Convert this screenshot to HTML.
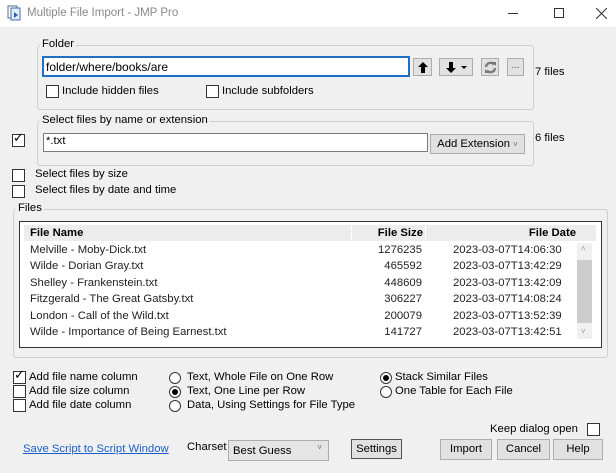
<!DOCTYPE html>
<html><head><style>
*{box-sizing:border-box}
body{margin:0;width:616px;height:473px;overflow:hidden;background:#f0f0f0;font-family:"Liberation Sans",sans-serif;font-size:11.3px;color:#000;position:relative}
.a{position:absolute;white-space:nowrap}
.cb{position:absolute;width:13px;height:13px;border:1px solid #333;background:#fff}
.rd{position:absolute;width:12px;height:12px;border:1px solid #333;border-radius:50%;background:#fff}
.rd.on::after{content:"";position:absolute;left:2px;top:2px;width:6px;height:6px;border-radius:50%;background:#000}
.grp{position:absolute;border:1px solid #cfcfcf;border-radius:3px}
.lg{position:absolute;background:#f0f0f0;padding:0 2px;top:-8px;left:4px}
.btn{position:absolute;border:1px solid #adadad;background:#e1e1e1;text-align:center;line-height:19px}
.in{position:absolute;background:#fff;border:1px solid #7a7a7a}
</style></head><body>
<div class="a" style="left:0;top:0;width:616px;height:27px;background:#fff"></div>
<svg class="a" style="left:7px;top:5px" width="14" height="16"><rect x="1" y="1" width="9" height="12" fill="#fff" stroke="#5a6b80"/><rect x="4" y="3" width="9" height="12" fill="#e4eefa" stroke="#3b6fb0"/><path d="M7 7l4 3-4 3z" fill="#2b5fa5"/></svg>
<div class="a" style="left:27px;top:7px;color:#888;font-size:11.5px">Multiple File Import - JMP Pro</div>
<div class="a" style="left:508px;top:13px;width:10px;height:1px;background:#333"></div>
<div class="a" style="left:554px;top:8px;width:10px;height:10px;border:1px solid #333"></div>
<svg class="a" style="left:596px;top:8px" width="11" height="11"><path d="M0 0L11 11M11 0L0 11" stroke="#333"/></svg>

<div class="grp" style="left:37px;top:45px;width:497px;height:65px"><span class="lg" style="left:2px">Folder</span></div>
<div class="in" style="left:42px;top:56px;width:368px;height:21px;border:2px solid #1f6fc4;padding:2px 2px;font-size:12px">folder/where/books/are</div>
<div class="btn" style="left:413px;top:58px;width:19px;height:18px"><svg style="position:absolute;left:4px;top:3px" width="10" height="11"><path d="M5 0L10 5H7V11H3V5H0Z" fill="#000"/></svg></div>
<div class="btn" style="left:439px;top:58px;width:34px;height:18px"><svg style="position:absolute;left:6px;top:3px" width="22" height="11"><path d="M5 11L10 6H7V0H3V6H0Z" fill="#000"/><path d="M15 4h6l-3 3z" fill="#000"/></svg></div>
<div class="btn" style="left:481px;top:58px;width:18px;height:18px"><svg style="position:absolute;left:2px;top:2px" width="13" height="13"><path d="M2 6A4.5 4.5 0 0 1 10 3.5M11 7A4.5 4.5 0 0 1 3 9.5" stroke="#777" stroke-width="2.2" fill="none"/><path d="M8 1h4v4z M5 12H1V8z" fill="#777"/></svg></div>
<div class="btn" style="left:507px;top:58px;width:17px;height:18px;line-height:14px;font-size:10px;color:#555">...</div>
<div class="a" style="left:535px;top:66px">7 files</div>
<div class="cb" style="left:46px;top:85px"></div><div class="a" style="left:62px;top:85px">Include hidden files</div>
<div class="cb" style="left:206px;top:85px"></div><div class="a" style="left:222px;top:85px">Include subfolders</div>

<div class="grp" style="left:37px;top:121px;width:497px;height:45px"><span class="lg" style="left:2px">Select files by name or extension</span></div>
<div class="in" style="left:43px;top:133px;width:385px;height:19px;padding:1px 2px">*.txt</div>
<div class="btn" style="left:430px;top:134px;width:95px;height:20px">Add Extension <span style="font-size:8px;color:#666">˅</span></div>
<div class="a" style="left:535px;top:132px">6 files</div>
<div class="cb" style="left:12px;top:134px"></div><div class="a" style="left:13px;top:130px;font-size:13px">✓</div>

<div class="cb" style="left:12px;top:169px"></div><div class="a" style="left:35px;top:168px">Select files by size</div>
<div class="cb" style="left:12px;top:185px"></div><div class="a" style="left:35px;top:184px">Select files by date and time</div>

<div class="grp" style="left:13px;top:209px;width:595px;height:149px"><span class="lg" style="left:2px">Files</span></div>
<div class="a" style="left:19px;top:221px;width:583px;height:127px;background:#fff;border:1px solid #333">
<div class="a" style="left:4px;top:3px;width:327px;height:16px;background:#ececec;font-weight:bold;padding-left:6px;line-height:16px">File Name</div>
<div class="a" style="left:332px;top:3px;width:73px;height:16px;background:#ececec;font-weight:bold;text-align:right;padding-right:2px;line-height:16px">File Size</div>
<div class="a" style="left:406px;top:3px;width:170px;height:16px;background:#ececec;font-weight:bold;text-align:right;padding-right:20px;line-height:16px">File Date</div>
<div class="a" style="left:557px;top:21px;width:15px;height:96px;background:#f0f0f0"></div>
<div class="a" style="left:557px;top:38px;width:15px;height:63px;background:#cdcdcd"></div>
<div class="a" style="left:561px;top:22px;color:#999;font-size:8px">˄</div>
<div class="a" style="left:561px;top:105px;color:#999;font-size:8px">˅</div>
</div>
<div class="a" style="left:30px;top:242px;line-height:16.4px;color:#222">Melville - Moby-Dick.txt<br>Wilde - Dorian Gray.txt<br>Shelley - Frankenstein.txt<br>Fitzgerald - The Great Gatsby.txt<br>London - Call of the Wild.txt<br>Wilde - Importance of Being Earnest.txt</div>
<div class="a" style="left:360px;width:62px;top:242px;line-height:16.4px;text-align:right;color:#222">1276235<br>465592<br>448609<br>306227<br>200079<br>141727</div>
<div class="a" style="left:453px;top:242px;line-height:16.4px;color:#222">2023-03-07T14:06:30<br>2023-03-07T13:42:29<br>2023-03-07T13:42:09<br>2023-03-07T14:08:24<br>2023-03-07T13:52:39<br>2023-03-07T13:42:51</div>

<div class="cb" style="left:13px;top:371px"></div><div class="a" style="left:14px;top:367px;font-size:13px">✓</div><div class="a" style="left:29px;top:371px">Add file name column</div>
<div class="cb" style="left:13px;top:385px"></div><div class="a" style="left:29px;top:385px">Add file size column</div>
<div class="cb" style="left:13px;top:399px"></div><div class="a" style="left:29px;top:399px">Add file date column</div>
<div class="rd" style="left:169px;top:372px"></div><div class="a" style="left:187px;top:371px">Text, Whole File on One Row</div>
<div class="rd on" style="left:169px;top:386px"></div><div class="a" style="left:187px;top:385px">Text, One Line per Row</div>
<div class="rd" style="left:169px;top:400px"></div><div class="a" style="left:187px;top:399px">Data, Using Settings for File Type</div>
<div class="rd on" style="left:380px;top:372px"></div><div class="a" style="left:395px;top:371px">Stack Similar Files</div>
<div class="rd" style="left:380px;top:386px"></div><div class="a" style="left:395px;top:385px">One Table for Each File</div>

<div class="a" style="left:490px;top:423px">Keep dialog open</div>
<div class="cb" style="left:587px;top:423px"></div>
<div class="a" style="left:23px;top:443px;color:#1a5fc9;text-decoration:underline">Save Script to Script Window</div>
<div class="a" style="left:187px;top:441px">Charset</div>
<div class="a" style="left:228px;top:440px;width:101px;height:21px;border:1px solid #adadad;background:#e5e5e5;padding:4px 4px">Best Guess<span style="position:absolute;right:6px;top:2px;font-size:8px;color:#666">˅</span></div>
<div class="btn" style="left:351px;top:439px;width:51px;height:20px;border-color:#555">Settings</div>
<div class="btn" style="left:440px;top:439px;width:52px;height:21px">Import</div>
<div class="btn" style="left:497px;top:439px;width:53px;height:21px">Cancel</div>
<div class="btn" style="left:553px;top:439px;width:50px;height:21px">Help</div>
</body></html>
